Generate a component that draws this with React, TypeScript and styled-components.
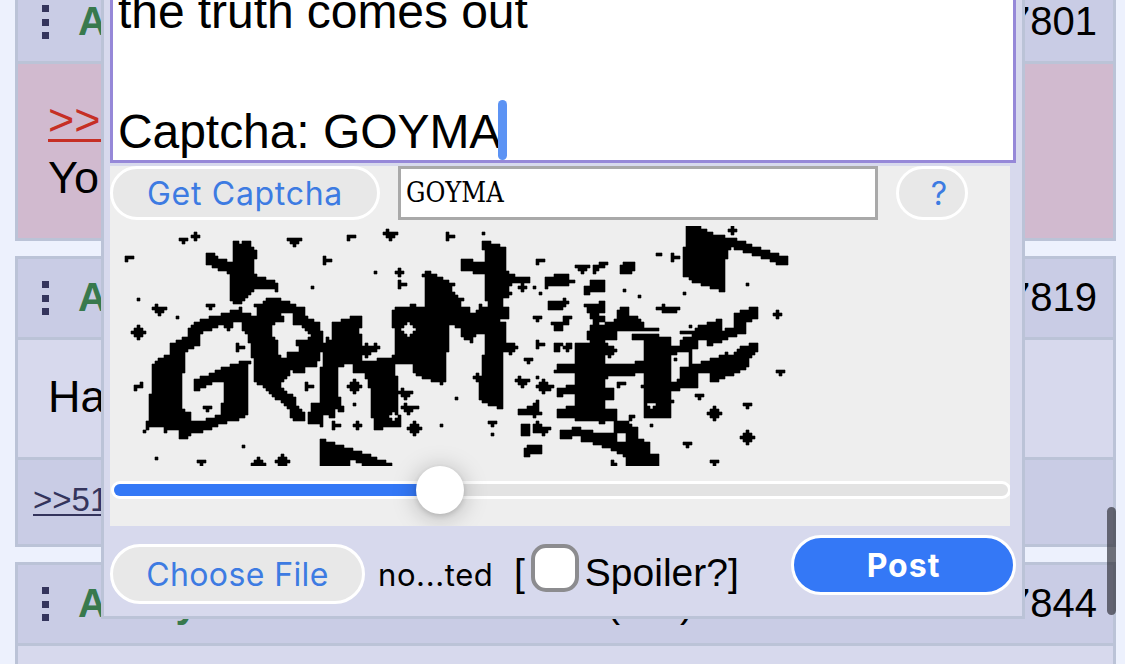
import React from 'react';
import styled, { createGlobalStyle } from 'styled-components';

const colors = {
  page: '#edf1fd',
  head: '#c9cce5',
  body: '#d7d9ed',
  line: '#bbc3d7',
  pink: '#d1bacf',
  blue: '#3478f6',
};

const Global = createGlobalStyle`
  * { box-sizing: border-box; }
  body {
    margin: 0;
    height: 664px;
    overflow: hidden;
    background: ${colors.page};
    font-family: "Liberation Sans", Arial, sans-serif;
    color: #000;
  }
`;

const Page = styled.div`
  position: relative;
  height: 664px;
  overflow: hidden;
`;

const Thread = styled.main`
  display: flex;
  flex-direction: column;
  gap: 15px;
  width: 1101px;
  margin: -20px 0 0 15px;
`;

const PostBox = styled.article`
  border: 3px solid ${colors.line};
  background: ${colors.body};
`;

const PostHead = styled.header`
  display: flex;
  align-items: center;
  height: 81px;
  padding: 0 16px 2px 24px;
  border-bottom: 3px solid ${colors.line};
  background: ${colors.head};
  font-size: 40px;
  line-height: 46px;
  white-space: nowrap;
`;

const Dots = styled.span`
  display: flex;
  flex-direction: column;
  justify-content: space-between;
  width: 7px;
  height: 34px;
  margin: 2px 29px 0 0;
`;

const Dot = styled.i`
  width: 7px;
  height: 7px;
  background: #34345c;
`;

const Name = styled.b`
  width: 235px;
  color: #38794d;
  letter-spacing: -1.2px;
`;

const Stamp = styled.span`
  flex: 1;
  padding-left: 138px;
`;

const PostNumber = styled.span``;

const Message = styled.div<{ $height: number; $pink?: boolean }>`
  height: ${(p) => p.$height}px;
  padding: ${(p) => (p.$pink ? 27 : 28)}px 30px 0;
  background: ${(p) => (p.$pink ? colors.pink : colors.body)};
  font-size: 45px;
  line-height: 58px;
`;

const Quote = styled.a`
  display: block;
  width: max-content;
  color: #c62f25;
  text-decoration: underline;
  text-decoration-thickness: 3px;
  text-underline-offset: 4px;
`;

const Replies = styled.footer`
  height: 87px;
  padding: 20px 15px 0;
  border-top: 3px solid ${colors.line};
  background: ${colors.head};
  color: #34345c;
  font-size: 33px;
  line-height: 40px;
  text-decoration: underline;
  text-decoration-thickness: 2px;
  text-underline-offset: 3px;
`;

const ReplyWindow = styled.form`
  position: absolute;
  left: 101px;
  top: -60px;
  width: 924px;
  height: 679px;
  padding: 0 6px;
  border: 3px solid ${colors.line};
  background: ${colors.body};
`;

const Comment = styled.div`
  height: 220px;
  margin-bottom: 3px;
  padding: 36px 5px 0;
  border: 3px solid #9688d8;
  background: #fff;
  font-size: 48px;
  line-height: 60px;
  letter-spacing: -0.06px;
  white-space: pre;
`;

const Caret = styled.span`
  position: absolute;
  left: 394px;
  top: 157px;
  width: 9px;
  height: 60px;
  border-radius: 5px;
  background: #5c93f4;
`;

const CaptchaPanel = styled.section`
  width: 900px;
  height: 360px;
  overflow: hidden;
  background: #eee;
`;

const CaptchaRow = styled.div`
  display: flex;
  gap: 18px;
  height: 54px;
  margin-bottom: 6px;
`;

const PillButton = styled.button<{
  $width: number;
  $height: number;
  $primary?: boolean;
  $shift?: number;
  $tracking?: number;
}>`
  flex: none;
  width: ${(p) => p.$width}px;
  height: ${(p) => p.$height}px;
  padding: 2px 0 0 ${(p) => p.$shift ?? 0}px;
  border: 3px solid #fff;
  border-radius: 30px;
  background: ${(p) => (p.$primary ? colors.blue : '#e8e8e8')};
  color: ${(p) => (p.$primary ? '#fff' : '#3d7be2')};
  font: ${(p) => (p.$primary ? 700 : 400)} 32px/40px Inter, sans-serif;
  letter-spacing: ${(p) => p.$tracking ?? 1}px;
  white-space: nowrap;
`;

const CaptchaInput = styled.input`
  width: 480px;
  height: 54px;
  padding: 0 5px 2px;
  border: 3px solid #a9a9a9;
  border-radius: 0;
  background: #fff;
  color: #000;
  font: 27px "DejaVu Serif Condensed", "DejaVu Serif", serif;
  font-stretch: condensed;
  outline: none;
`;

const CaptchaImage = styled.svg`
  display: block;
  width: 900px;
  height: 240px;
`;

const Slider = styled.div`
  position: relative;
  width: 900px;
  height: 18px;
  margin: 15px 0 0 1px;
  border: 3px solid #fff;
  border-radius: 9px;
  background: #e3e3e3;
`;

const SliderFill = styled.div`
  width: 326px;
  height: 12px;
  border-radius: 6px 0 0 6px;
  background: ${colors.blue};
`;

const SliderThumb = styled.div`
  position: absolute;
  left: 302px;
  top: -18px;
  width: 48px;
  height: 48px;
  border-radius: 50%;
  background: #fff;
  box-shadow: 0 3px 24px rgba(0, 0, 0, 0.26), 0 2px 5px rgba(0, 0, 0, 0.12);
`;

const Actions = styled.div`
  display: flex;
  align-items: flex-start;
  padding-top: 9px;
`;

const FileField = styled.div`
  display: flex;
  align-items: center;
  width: 404px;
  margin-top: 9px;
`;

const FileName = styled.span`
  margin: 2px 0 0 13px;
  font: 31px/40px Inter, sans-serif;
  letter-spacing: 0.6px;
`;

const Spoiler = styled.label`
  display: flex;
  width: 277px;
  margin-top: 9px;
  font-size: 39px;
  line-height: 58px;
`;

const CheckBox = styled.span`
  width: 48px;
  height: 48px;
  margin: 0 6px;
  border: 4px solid #8c8c8f;
  border-radius: 15px;
  background: #fff;
`;

const ScrollThumb = styled.div`
  position: absolute;
  left: 1107px;
  top: 507px;
  width: 9px;
  height: 108px;
  border-radius: 5px;
  background: rgba(48, 48, 58, 0.68);
`;

/* Captcha bitmap: ink shapes sampled onto a 300x80 grid of 3px cells.
   Shapes are stored in thirds of a pixel, in three side-by-side tiles. */
type Ink = [tile: number, erase: number, points: string];

const TILE_X = [0, 220, 440];

const inks: Ink[] = [
  [0, 0, '369,63 390,63 390,72 396,63 423,63 423,80 441,90 441,115 432,117 432,162 468,175 504,189 504,214 486,210 441,202 414,225 396,252 387,252 360,243 360,160 324,150 288,130 288,99 306,99 333,117 369,126'],
  [0, 0, '396,262 400,300 360,312 355,330 345,314 310,325 280,338 270,350 270,372 240,390 225,395 222,455 215,470 215,570 243,576 243,608 270,603 333,583 333,560 342,540 342,486 315,486 270,508 252,510 252,480 300,462 345,440 387,427 423,421 414,440 414,584 380,600 333,612 290,632 234,647 234,656 207,656 207,630 180,630 162,638 162,621 130,618 108,630 108,605 117,603 117,525 127,520 127,432 145,415 180,405 180,370 234,350 234,322 280,298 340,282 380,268'],
  [0, 0, '432,252 460,252 468,234 495,234 550,252 582,265 586,288 632,310 638,375 630,415 618,440 580,440 580,465 545,445 540,465 530,480 513,483 520,510 555,530 560,560 583,580 583,604 545,597 540,570 510,545 478,522 470,503 432,484 432,430 423,395 414,350 396,325 396,280 441,285 441,262'],
  [0, 1, '486,312 520,305 520,288 500,275 545,280 550,310 585,325 603,352 560,365 565,392 533,400 525,415 505,405 500,365 486,345'],
  [0, 0, '486,290 520,298 520,304 486,312'],
  [0, 0, '650,345 662,365 666,432 684,440 684,500 692,560 700,562 700,575 680,570 672,592 640,585 636,618 612,612 590,605 605,550 628,545 628,450 640,440 640,380'],
  [1, 0, '6,305 60,298 60,288 96,288 96,318 90,330 96,372 96,420 140,422 150,413 186,413 186,405 195,400 195,330 186,325 186,270 195,262 240,262 245,252 258,252 258,262 285,262 285,175 276,165 290,150 303,160 372,190 365,210 400,240 390,262 420,265 420,278 438,278 450,255 474,262 474,250 465,240 465,160 430,158 394,150 394,108 400,117 465,126 465,95 456,90 456,63 474,65 500,75 528,81 528,153 555,168 600,172 598,186 560,186 535,200 545,222 520,240 510,255 537,262 537,297 510,300 528,312 528,365 555,375 562,384 545,402 520,398 520,566 490,560 448,540 448,490 430,475 440,460 457,470 457,405 465,395 465,345 440,345 425,368 400,355 390,325 358,315 358,392 348,395 348,487 335,493 300,480 258,468 250,455 250,430 200,432 195,460 203,475 203,580 213,585 213,620 180,620 135,630 125,585 118,500 105,460 72,455 68,432 20,440 0,440 0,400 10,400'],
  [1, 1, '231,306 240,306 258,328 240,350 231,350 214,328'],
  [1, 1, '184,578 196,578 196,588 205,588 205,598 196,598 196,606 184,606 184,598 175,598 175,588 184,588'],
  [1, 0, '-30,655 -20,660 45,680 100,700 186,730 186,740 110,740 75,722 60,725 60,740 -30,740'],
  [2, 0, '408,18 440,18 490,40 545,54 714,113 714,134 690,134 620,107 545,82 534,90 534,115 526,120 524,214 508,212 425,185 399,165 399,80 408,78'],
  [2, 0, '75,368 120,368 112,350 118,315 150,318 200,297 200,270 215,261 238,261 238,288 275,295 282,320 235,330 200,335 200,358 165,365 200,390 180,412 165,405 165,432 235,432 283,423 283,360 247,358 247,342 330,342 330,350 363,352 363,378 390,375 395,355 428,345 390,340 390,333 430,333 435,322 490,305 516,297 516,330 550,322 552,280 590,270 605,261 625,261 625,297 588,308 588,338 535,355 490,375 470,375 470,358 440,358 442,385 427,392 427,435 470,422 515,405 540,408 552,400 560,385 605,370 625,370 625,395 600,415 597,440 560,460 498,484 480,484 480,455 443,460 443,502 400,505 363,518 363,592 283,592 283,455 235,468 180,468 165,475 165,503 192,505 192,538 165,538 165,568 201,568 201,602 155,610 140,602 80,605 75,595 22,592 22,567 50,567 50,558 75,555 75,522 25,528 20,505 75,495 75,458 12,457 25,435 75,432'],
  [2, 1, '363,405 400,395 418,395 418,437 390,445 385,480 363,488'],
  [2, 1, '292,549 317,549 317,556 309,558 309,566 301,566 301,558 292,556'],
  [2, 0, '247,322 327,322 327,333 247,333'],
  [2, 0, '30,632 65,630 70,621 90,621 95,632 190,640 192,602 225,602 262,625 262,655 300,668 300,703 327,703 327,738 228,738 228,710 175,685 95,662 90,650 30,656'],
  [2, 1, '200,640 225,635 228,668 200,665'],
  [2, 0, '183,720 192,720 210,738 183,738'],
  [2, 0, '130,160 130,135 148,140 148,127 175,127 175,136 150,148'],
  [2, 0, '210,135 225,126 256,126 256,152 240,161 210,161'],
  [2, 0, '103,205 120,190 120,180 166,180 166,215 120,215 115,222 103,222'],
  [2, 0, '103,250 145,250 150,243 165,243 165,275 145,280 165,292 160,305 135,315 120,285 110,270'],
  [2, 0, '-14,171 15,171 15,162 58,162 60,175 75,185 50,200 -14,203'],
  [2, 0, '-6,243 35,243 45,235 57,250 40,268 -6,268'],
  [2, 0, '5,308 40,308 40,290 65,290 55,318 35,320 35,332 12,332'],
  [2, 0, '12,370 38,370 30,380 25,395 12,395'],
  [2, 0, '42,378 52,370 66,370 64,384 50,395 42,390'],
  [1, 0, '565,567 600,560 627,538 627,570 620,600 605,585 565,583'],
  [1, 0, '574,610 600,610 600,648 574,648'],
  [1, 0, '610,615 625,605 635,620 662,625 640,645 610,637'],
  [1, 0, '583,688 595,688 595,675 636,675 636,702 605,705 600,718 583,708'],
  [2, 0, '318,262 335,262 340,252 350,262 390,262 380,275 345,278 318,270'],
  [0, 0, '540,440 582,440 582,455 565,462 540,452'],
  [2, 0, '237,585 255,585 255,594 245,602 237,602'],
];

const stamps: Record<string, string[]> = {
  o: ['1'],
  p: ['010', '111', '010'],
  d: ['00100', '01110', '11111', '01110', '00100'],
  t: ['111', '010'],
  T: ['11111', '01110', '00100'],
  r: ['100', '111', '100'],
  s: ['01000', '11111', '01110', '00100'],
  g: ['111', '100'],
  z: ['001', '111', '100'],
  h: ['00100', '01110', '11111'],
};

const specks: [kind: string, tile: number, x: number, y: number][] = [
  ['t', 0, 220, 63], ['p', 0, 256, 49], ['T', 0, 553, 66], ['g', 0, 58, 117], ['r', 0, 651, 121],
  ['o', 0, 85, 238], ['s', 0, 148, 268], ['o', 0, 202, 292], ['t', 0, 301, 260], ['d', 0, 85, 338],
  ['r', 0, 390, 382], ['z', 0, 85, 499], ['t', 0, 292, 567], ['o', 0, 103, 634], ['o', 0, 400, 679],
  ['o', 0, 139, 715], ['h', 0, 445, 725], ['d', 0, 517, 720], ['o', 0, 607, 202], ['t', 0, 274, 733],
  ['r', 0, 594, 499], ['p', 0, 358, 315], ['r', 0, 679, 616],
  ['g', 1, 68, 51], ['s', 1, 181, 43], ['r', 1, 360, 49], ['o', 1, 460, 40], ['o', 1, 137, 157],
  ['p', 1, 208, 157], ['r', 1, 216, 193], ['d', 1, 111, 390], ['p', 1, 133, 382], ['d', 1, 73, 499],
  ['o', 1, 73, 553], ['p', 1, 82, 616], ['s', 1, 226, 518], ['s', 1, 234, 566], ['d', 1, 253, 625],
  ['o', 1, 262, 562], ['o', 1, 334, 616], ['o', 1, 379, 535], ['t', 1, 487, 610], ['o', 1, 487, 643],
  ['p', 1, 577, 202], ['g', 1, 630, 126], ['o', 1, 614, 203], ['o', 1, 628, 216], ['t', 1, 622, 296],
  ['r', 1, 630, 373], ['t', 1, 595, 422], ['s', 1, 577, 485], ['d', 1, 638, 495], ['o', 1, 622, 472],
  ['o', 1, 658, 508], ['o', 1, 631, 580], ['o', 1, 0, 121], ['o', 1, 668, 498],
  ['p', 2, 547, 31], ['o', 2, 322, 103], ['o', 2, 331, 103], ['r', 2, 375, 112], ['o', 2, 223, 211],
  ['T', 2, 97, 147], ['o', 2, 268, 229], ['o', 2, 403, 221], ['o', 2, 592, 193], ['p', 2, 682, 283],
  ['t', 2, 691, 458], ['p', 2, 530, 409], ['o', 2, 376, 418], ['t', 2, 448, 530], ['d', 2, 493, 580],
  ['t', 2, 592, 557], ['d', 2, 589, 652], ['t', 2, 412, 674], ['t', 2, 493, 728], ['o', 2, 305, 616],
  ['g', 2, 218, 492], ['o', 2, 421, 319], ['o', 2, 366, 544], ['o', 2, 279, 499],
];

function inside(points: number[][], x: number, y: number) {
  let hit = false;
  for (let i = 0, j = points.length - 1; i < points.length; j = i++) {
    const [ax, ay] = points[i];
    const [bx, by] = points[j];
    if (ay > y !== by > y && x < ((bx - ax) * (y - ay)) / (by - ay) + ax) hit = !hit;
  }
  return hit;
}

function buildCaptcha() {
  const grid = Array.from({ length: 80 }, () => new Array<boolean>(300).fill(false));
  for (const [tile, erase, list] of inks) {
    const points = list.split(' ').map((pair) => {
      const [x, y] = pair.split(',').map(Number);
      return [x / 3 + TILE_X[tile], y / 3 - 6];
    });
    for (let row = 0; row < 80; row++) {
      for (let col = 0; col < 300; col++) {
        if (inside(points, col * 3 + 1.5, row * 3 + 1.5)) grid[row][col] = !erase;
      }
    }
  }
  for (const [kind, tile, x, y] of specks) {
    const rows = stamps[kind];
    const left = Math.round((x / 3 + TILE_X[tile]) / 3 - rows[0].length / 2);
    const top = Math.round((y / 3 - 6) / 3 - rows.length / 2);
    rows.forEach((cells, r) =>
      [...cells].forEach((cell, c) => {
        if (cell === '1' && grid[top + r]) grid[top + r][left + c] = true;
      }),
    );
  }
  let d = '';
  grid.forEach((cells, row) => {
    for (let col = 0; col < 300; col++) {
      if (!cells[col]) continue;
      const start = col;
      while (col < 300 && cells[col]) col++;
      d += `M${start * 3} ${row * 3}h${(col - start) * 3}v3H${start * 3}z`;
    }
  });
  return d;
}

const captchaPath = buildCaptcha();

function Head({ number }: { number: string }) {
  return (
    <PostHead>
      <Dots><Dot /><Dot /><Dot /></Dots>
      <Name>Anonymous</Name>
      <Stamp>05/17/25(Sat)</Stamp>
      <PostNumber>{number}</PostNumber>
    </PostHead>
  );
}

export default function App() {
  return (
    <>
      <Global />
      <Page>
        <Thread>
          <PostBox>
            <Head number="7801" />
            <Message $height={174} $pink>
              <Quote>&gt;&gt;51</Quote>
              You
            </Message>
          </PostBox>
          <PostBox>
            <Head number="7819" />
            <Message $height={117}>Ha</Message>
            <Replies>&gt;&gt;517</Replies>
          </PostBox>
          <PostBox>
            <Head number="7844" />
            <Message $height={117} />
          </PostBox>
        </Thread>
        <ReplyWindow>
          <Comment>{'the truth comes out\n\nCaptcha: GOYMA'}</Comment>
          <Caret />
          <CaptchaPanel>
            <CaptchaRow>
              <PillButton type="button" $width={270} $height={54} $tracking={0.7}>Get Captcha</PillButton>
              <CaptchaInput defaultValue="GOYMA" />
              <PillButton type="button" $width={72} $height={54} $shift={15}>?</PillButton>
            </CaptchaRow>
            <CaptchaImage viewBox="0 0 900 240">
              <path d={captchaPath} stroke="#000" strokeWidth={0.6} strokeLinejoin="round" />
            </CaptchaImage>
            <Slider>
              <SliderFill />
              <SliderThumb />
            </Slider>
          </CaptchaPanel>
          <Actions>
            <FileField>
              <PillButton type="button" $width={255} $height={60} $tracking={0.4}>Choose File</PillButton>
              <FileName>no...ted</FileName>
            </FileField>
            <Spoiler>[<CheckBox />Spoiler?]</Spoiler>
            <PillButton type="button" $width={225} $height={60} $primary>Post</PillButton>
          </Actions>
        </ReplyWindow>
        <ScrollThumb />
      </Page>
    </>
  );
}
